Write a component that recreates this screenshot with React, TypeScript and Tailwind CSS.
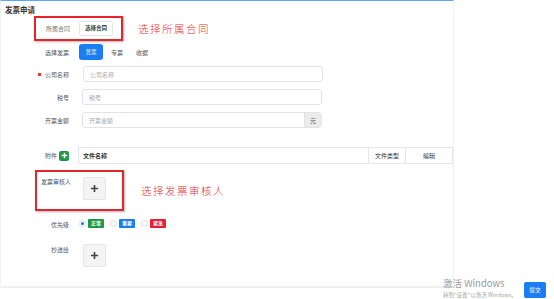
import React from "react";

const F = { fontFamily: '"Noto Sans CJK SC", "Noto Sans", sans-serif' };

function Label({ children, w = 68, className = "" }: { children: React.ReactNode; w?: number; className?: string }) {
  return (
    <div className={"shrink-0 text-right text-[6px] text-[#555] " + className} style={{ width: w }}>
      {children}
    </div>
  );
}

function Input({ placeholder, addon }: { placeholder: string; addon?: string }) {
  return (
    <div className="flex h-[16px] w-[240px] rounded-[3px] border border-[#e3e3e3] bg-white overflow-hidden">
      <div className="flex flex-1 items-center pl-[6px] text-[6px] text-[#aaa]">{placeholder}</div>
      {addon && (
        <div className="flex w-[17px] items-center justify-center border-l border-[#e3e3e3] bg-[#ececec] text-[6px] text-[#555]">
          {addon}
        </div>
      )}
    </div>
  );
}

function PlusBox() {
  return (
    <div className="flex h-[23px] w-[23px] items-center justify-center rounded-[2px] border border-[#e6e6e6] bg-[#f4f4f4]">
      <svg width="9" height="9" viewBox="0 0 10 10">
        <path d="M5 1v8M1 5h8" stroke="#444" strokeWidth="1.8" />
      </svg>
    </div>
  );
}

function Radio({ on }: { on?: boolean }) {
  return (
    <div className="flex h-[7px] w-[7px] items-center justify-center rounded-full border border-[#dcdcdc] bg-white">
      {on && <div className="h-[3px] w-[3px] rounded-full bg-[#1677d2]" />}
    </div>
  );
}

function Tag({ text, color }: { text: string; color: string }) {
  return (
    <div className="flex h-[9px] items-center rounded-[1px] px-[3px] text-[5px] font-bold text-white" style={{ background: color }}>
      {text}
    </div>
  );
}

export default function App() {
  return (
    <div className="relative h-[299px] w-[554px] overflow-hidden bg-white" style={F}>
      <div className="flex h-[288px] w-[454px] flex-col border-t border-l border-r border-t-[#5aa6f6] border-l-[#f1f1f1] border-r-[#f1f1f1] border-b-2 border-b-[#efefef]">
        <div className="pl-[4px] pt-[3px] text-[7.5px] font-bold leading-[12px] text-[#333]">发票申请</div>

        {/* contract row */}
        <div className="flex items-center">
          <div className="ml-[33px] flex h-[25px] w-[89px] items-center border-2 border-[#e4262c] shadow-[1px_1px_2px_rgba(0,0,0,0.3)]">
            <div className="ml-[10px] text-[6px] text-[#777]">所属合同</div>
            <div className="ml-[9px] flex h-[15px] w-[34px] items-center justify-center rounded-[3px] border border-[#e4e4e4] text-[5.5px] font-bold text-[#333]">
              选择合同
            </div>
          </div>
          <div className="ml-[15px] text-[10.5px] font-light tracking-[1.5px] text-[#e8302f]">选择所属合同</div>
        </div>

        {/* invoice type */}
        <div className="mt-[3px] flex h-[16px] items-center">
          <Label>选择发票</Label>
          <div className="ml-[10px] flex h-[16px] w-[24px] items-center justify-center rounded-[3px] bg-[#1a7ef2] text-[5.5px] text-white">普票</div>
          <div className="ml-[8px] text-[6px] text-[#555]">专票</div>
          <div className="ml-[13px] text-[6px] text-[#555]">收据</div>
        </div>

        <div className="mt-[6px] flex items-center">
          <Label>
            <span className="mr-[4px] inline-block h-[3px] w-[3px] bg-[#e33] align-middle" />公司名称
          </Label>
          <div className="ml-[14px]">
            <Input placeholder="公司名称" />
          </div>
        </div>

        <div className="mt-[7px] flex items-center">
          <Label>税号</Label>
          <div className="ml-[13px]">
            <Input placeholder="税号" />
          </div>
        </div>

        <div className="mt-[7px] flex items-center">
          <Label>开票金额</Label>
          <div className="ml-[13px]">
            <Input placeholder="开票金额" addon="元" />
          </div>
        </div>

        {/* attachment */}
        <div className="mt-[19px] flex items-center">
          <Label w={56}>附件</Label>
          <div className="ml-[2px] flex h-[10px] w-[10px] items-center justify-center rounded-[2px] bg-[#1e9b45]">
            <svg width="7" height="7" viewBox="0 0 10 10">
              <path d="M5 1v8M1 5h8" stroke="#fff" strokeWidth="2" />
            </svg>
          </div>
          <div className="ml-[9px] flex h-[17px] flex-1 border border-[#e6e6e6] text-[6px] text-[#333]">
            <div className="flex flex-1 items-center pl-[4px] font-bold">文件名称</div>
            <div className="flex w-[37px] items-center justify-center border-l border-[#e6e6e6]">文件类型</div>
            <div className="flex w-[47px] items-center justify-center border-l border-[#e6e6e6]">编辑</div>
          </div>
        </div>

        {/* reviewer */}
        <div className="mt-[6px] flex items-center">
          <div className="ml-[34px] flex h-[41px] w-[89px] items-start border-2 border-[#e4262c] shadow-[1px_1px_2px_rgba(0,0,0,0.3)]">
            <div className="ml-[4px] mt-[5px] text-[6px] text-[#555]">发票审核人</div>
            <div className="ml-[12px] mt-[5px]">
              <PlusBox />
            </div>
          </div>
          <div className="ml-[17px] text-[10.5px] font-light tracking-[1.5px] text-[#e8302f]">选择发票审核人</div>
        </div>

        {/* priority */}
        <div className="mt-[6px] flex items-center">
          <Label className="pt-[3px]">优先级</Label>
          <div className="ml-[10px] flex items-center gap-[2px]">
            <Radio on />
            <Tag text="正常" color="#1d9a45" />
            <div className="w-[2px]" />
            <Radio />
            <Tag text="重要" color="#1a7ef2" />
            <div className="w-[2px]" />
            <Radio />
            <Tag text="紧急" color="#ea1e35" />
          </div>
        </div>

        {/* cc */}
        <div className="mt-[15px] flex items-start">
          <Label className="pt-[1px]">抄送给</Label>
          <div className="ml-[14px]">
            <PlusBox />
          </div>
        </div>
      </div>

      {/* windows watermark */}
      <div className="absolute left-[443px] top-[277px] text-[9.5px] leading-[12px] text-[#9a9a9a]">
        激活 Windows
      </div>
      <div className="absolute left-[443px] top-[291px] whitespace-nowrap text-[5.5px] leading-[8px] text-[#a5a5a5]">
        转到"设置"以激活 Windows。
      </div>
      <div className="absolute left-[524px] top-[282px] flex h-[16px] w-[22px] items-center justify-center rounded-[2px] bg-[#1a7ef2] text-[5.5px] text-white">
        提交
      </div>
    </div>
  );
}
